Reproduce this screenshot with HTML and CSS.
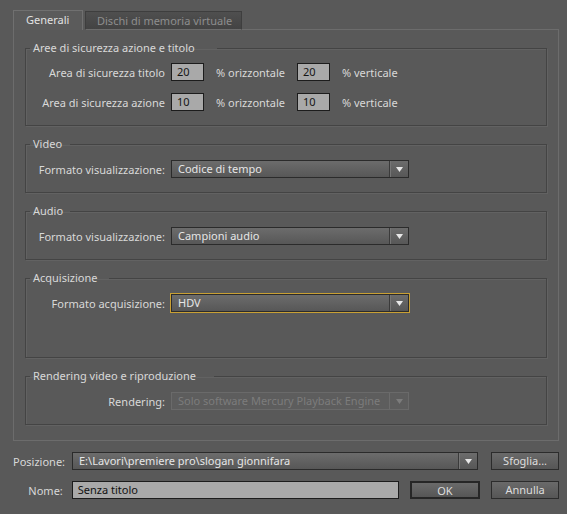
FILE: index.html
```html
<!DOCTYPE html>
<html lang="it">
<head>
<meta charset="utf-8">
<title>Impostazioni progetto</title>
<link rel="stylesheet" href="styles.css">
</head>
<body>
<div class="dialog">
  <div class="tabs">
    <div class="tab tab-active">Generali</div>
    <div class="tab tab-inactive">Dischi di memoria virtuale</div>
    <div class="tab-fill"></div>
  </div>
  <div class="panel">
    <fieldset class="group">
      <legend class="legend legend-safe">Aree di sicurezza azione e titolo</legend>
      <div class="rows rows-safe">
        <div class="row">
          <span class="label">Area di sicurezza titolo</span>
          <span class="num">20</span>
          <span class="unit unit-h">% orizzontale</span>
          <span class="num">20</span>
          <span class="unit">% verticale</span>
        </div>
        <div class="row">
          <span class="label">Area di sicurezza azione</span>
          <span class="num">10</span>
          <span class="unit unit-h">% orizzontale</span>
          <span class="num">10</span>
          <span class="unit">% verticale</span>
        </div>
      </div>
    </fieldset>

    <fieldset class="group">
      <legend class="legend legend-short">Video</legend>
      <div class="rows">
        <div class="row">
          <span class="label">Formato visualizzazione:</span>
          <div class="select"><span class="select-value">Codice di tempo</span><span class="select-btn"><svg width="7" height="5" viewBox="0 0 7 5"><polygon points="0,0 7,0 3.5,5" fill="#e8e8e8"/></svg></span></div>
        </div>
      </div>
    </fieldset>

    <fieldset class="group">
      <legend class="legend legend-short">Audio</legend>
      <div class="rows">
        <div class="row">
          <span class="label">Formato visualizzazione:</span>
          <div class="select"><span class="select-value">Campioni audio</span><span class="select-btn"><svg width="7" height="5" viewBox="0 0 7 5"><polygon points="0,0 7,0 3.5,5" fill="#e8e8e8"/></svg></span></div>
        </div>
      </div>
    </fieldset>

    <fieldset class="group">
      <legend class="legend legend-acq">Acquisizione</legend>
      <div class="rows rows-tall">
        <div class="row">
          <span class="label">Formato acquisizione:</span>
          <div class="select select-focus"><span class="select-value">HDV</span><span class="select-btn"><svg width="7" height="5" viewBox="0 0 7 5"><polygon points="0,0 7,0 3.5,5" fill="#e8e8e8"/></svg></span></div>
        </div>
      </div>
    </fieldset>

    <fieldset class="group group-last">
      <legend class="legend legend-render">Rendering video e riproduzione</legend>
      <div class="rows">
        <div class="row">
          <span class="label">Rendering:</span>
          <div class="select select-disabled"><span class="select-value">Solo software Mercury Playback Engine</span><span class="select-btn"><svg width="7" height="5" viewBox="0 0 7 5"><polygon points="0,0 7,0 3.5,5" fill="#7c7c7c"/></svg></span></div>
        </div>
      </div>
    </fieldset>
  </div>

  <div class="footer-row footer-first">
    <span class="footer-label">Posizione:</span>
    <div class="select select-path"><span class="select-value">E:\Lavori\premiere pro\slogan gionnifara</span><span class="select-btn"><svg width="7" height="5" viewBox="0 0 7 5"><polygon points="0,0 7,0 3.5,5" fill="#e8e8e8"/></svg></span></div>
    <button class="btn btn-browse">Sfoglia...</button>
  </div>
  <div class="footer-row">
    <span class="footer-label">Nome:</span>
    <span class="text-input">Senza titolo</span>
    <button class="btn btn-ok">OK</button>
    <button class="btn btn-cancel">Annulla</button>
  </div>
</div>
</body>
</html>
```

FILE: styles.css
```css
* { box-sizing: border-box; }

html, body {
  margin: 0;
  padding: 0;
  background: #595959;
}

body {
  font-family: "Noto Sans", "Open Sans", sans-serif;
  font-size: 11px;
  color: #d6d6d6;
}

.dialog {
  width: 567px;
  height: 514px;
  padding: 10px 8px 0 13px;
}

/* Tabs */
.tabs {
  display: flex;
  align-items: flex-end;
  height: 20px;
}

.tab {
  line-height: 18px;
  white-space: nowrap;
}

.tab-active {
  height: 20px;
  width: 70px;
  padding-left: 12px;
  border: 1px solid #707070;
  border-bottom: none;
  color: #e2e2e2;
  background: #5b5b5b;
}

.tab-inactive {
  height: 19px;
  width: 157px;
  margin-left: 2px;
  padding-left: 11px;
  border: 1px solid #3e3e3e;
  border-bottom: 1px solid #6c6c6c;
  color: #8e8e8e;
  background: linear-gradient(#4f4f4f, #434343);
  line-height: 17px;
}

.tab-fill {
  flex: 1;
  height: 1px;
  background: #6c6c6c;
}

/* Panel */
.panel {
  border: 1px solid #6c6c6c;
  border-top: none;
  padding: 11px 11px 15px 11px;
}

.group {
  margin: 0 0 11px 0;
  padding: 0;
  border: 1px solid #444444;
  box-shadow: 1px 1px 0 #626262, inset 1px 1px 0 #626262;
  min-width: 0;
}

.group-last { margin-bottom: 0; }

.legend {
  margin-left: 4px;
  padding: 0 0 0 3px;
  line-height: 14px;
  height: 14px;
  color: #d8d8d8;
  white-space: nowrap;
}

.legend-safe { width: 187px; }
.legend-short { width: 40px; }
.legend-acq { width: 79px; }
.legend-render { width: 184px; }

.rows {
  padding: 9px 0 14px 0;
  display: flex;
  flex-direction: column;
  gap: 12px;
}

.rows-safe { padding-top: 8px; }
.rows-tall { padding-bottom: 45px; }

.row {
  display: flex;
  align-items: center;
  height: 18px;
}

.label {
  width: 139px;
  margin-right: 6px;
  text-align: right;
  white-space: nowrap;
  color: #d8d8d8;
}

.num {
  width: 33px;
  height: 18px;
  padding-left: 5px;
  line-height: 16px;
  border: 1px solid #1c1c1c;
  background: #a9a9a9;
  color: #151515;
}

.unit {
  margin-left: 12px;
  white-space: nowrap;
  color: #d8d8d8;
}

.unit-h { width: 81px; }

/* Dropdowns */
.select {
  display: flex;
  width: 238px;
  height: 18px;
  border: 1px solid #2b2b2b;
  background: linear-gradient(#6c6c6c, #575757);
}

.select-value {
  flex: 1;
  padding-left: 6px;
  line-height: 16px;
  color: #e6e6e6;
  white-space: nowrap;
  overflow: hidden;
}

.select-btn {
  width: 19px;
  display: flex;
  align-items: center;
  justify-content: center;
  border-left: 1px solid #3a3a3a;
  box-shadow: inset 1px 0 0 #767676;
}

.select-focus {
  box-shadow: 0 0 0 1px #c9a034;
}

.select-disabled {
  background: #5d5d5d;
  border-color: #6a6a6a;
}

.select-disabled .select-value { color: #7c7c7c; }
.select-disabled .select-btn {
  border-left-color: #6c6c6c;
  box-shadow: none;
}

/* Footer */
.footer-row {
  display: flex;
  align-items: center;
  height: 18px;
  margin-top: 11px;
}

.footer-label {
  width: 50px;
  margin-right: 9px;
  text-align: right;
  white-space: nowrap;
  color: #d8d8d8;
}

.select-path { width: 407px; }

.text-input {
  width: 328px;
  height: 18px;
  padding-left: 5px;
  line-height: 16px;
  border: 1px solid #1c1c1c;
  background: #a9a9a9;
  color: #111111;
}

.btn {
  height: 18px;
  padding: 0;
  font-family: inherit;
  font-size: 11px;
  color: #dedede;
  border: 1px solid #2c2c2c;
  background: linear-gradient(#6a6a6a, #565656);
  line-height: 16px;
}

.btn-browse { width: 68px; margin-left: 13px; }
.btn-ok { width: 71px; margin-left: 11px; border: 2px solid #262626; }
.btn-cancel { width: 68px; margin-left: 11px; }
```
